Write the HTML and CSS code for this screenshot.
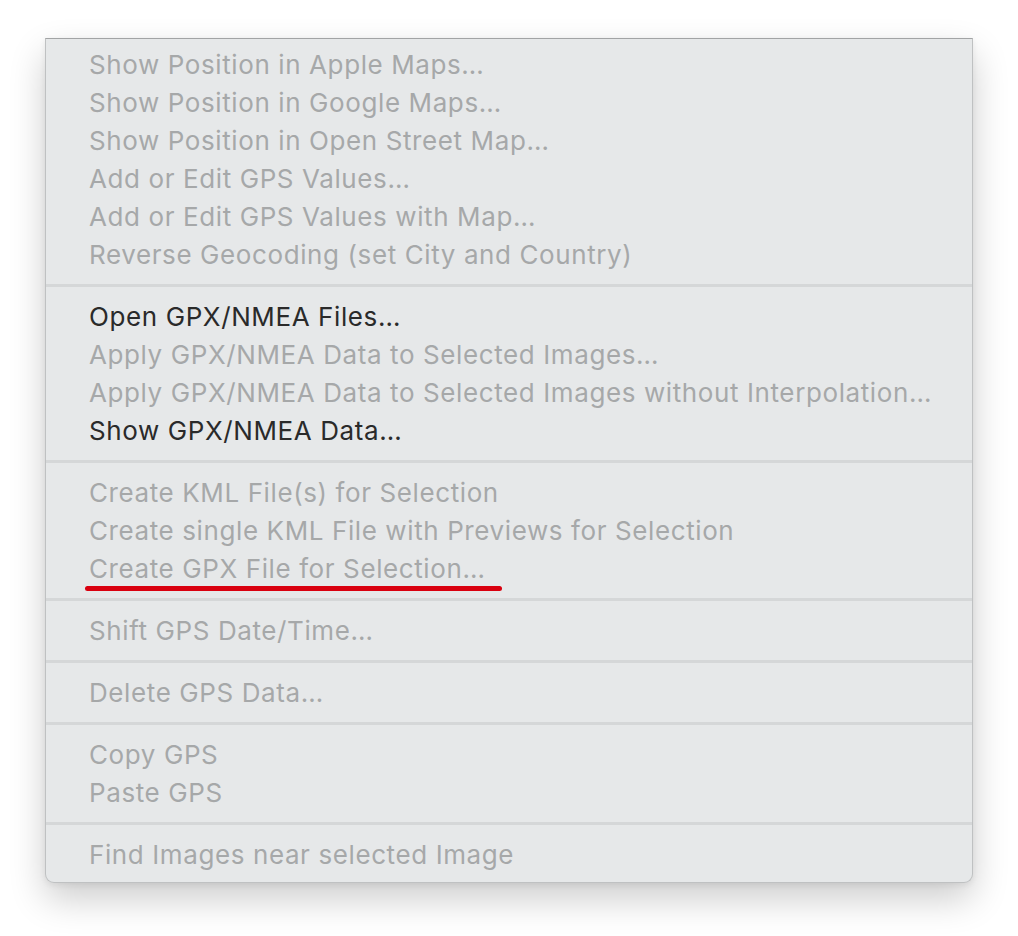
FILE: index.html
```html
<!DOCTYPE html>
<html>
<head>
<meta charset="utf-8">
<link rel="stylesheet" href="styles.css">
</head>
<body>
<div class="menu">
  <div class="group">
    <div class="item">Show Position in Apple Maps…</div>
    <div class="item">Show Position in Google Maps…</div>
    <div class="item">Show Position in Open Street Map…</div>
    <div class="item">Add or Edit GPS Values…</div>
    <div class="item">Add or Edit GPS Values with Map…</div>
    <div class="item">Reverse Geocoding (set City and Country)</div>
  </div>
  <div class="sep"></div>
  <div class="group">
    <div class="item enabled">Open GPX/NMEA Files…</div>
    <div class="item">Apply GPX/NMEA Data to Selected Images…</div>
    <div class="item">Apply GPX/NMEA Data to Selected Images without Interpolation…</div>
    <div class="item enabled">Show GPX/NMEA Data…</div>
  </div>
  <div class="sep"></div>
  <div class="group">
    <div class="item">Create KML File(s) for Selection</div>
    <div class="item">Create single KML File with Previews for Selection</div>
    <div class="item marked">Create GPX File for Selection…</div>
  </div>
  <div class="sep"></div>
  <div class="group">
    <div class="item">Shift GPS Date/Time…</div>
  </div>
  <div class="sep"></div>
  <div class="group">
    <div class="item">Delete GPS Data…</div>
  </div>
  <div class="sep"></div>
  <div class="group">
    <div class="item">Copy GPS</div>
    <div class="item">Paste GPS</div>
  </div>
  <div class="sep"></div>
  <div class="group">
    <div class="item">Find Images near selected Image</div>
  </div>
</div>
</body>
</html>
```

FILE: styles.css
```css
html, body {
  margin: 0;
  padding: 0;
  background: #ffffff;
}
body {
  padding: 38px 0 0 45px;
  height: 936px;
  box-sizing: border-box;
}
.menu {
  width: 928px;
  box-sizing: border-box;
  background: #e6e8e9;
  border: 1px solid #bfc1c2;
  border-top-color: #a2a4a5;
  border-radius: 0 0 9px 9px;
  padding: 7px 0 8px 0;
  box-shadow: 0 16px 36px rgba(0, 0, 0, 0.2), 0 2px 6px rgba(0, 0, 0, 0.07);
  font-family: "Inter", "Noto Sans", sans-serif;
  font-size: 26px;
  letter-spacing: 0.6px;
  color: #a6a8a9;
}
.item {
  height: 38px;
  line-height: 38px;
  padding-left: 43px;
  white-space: nowrap;
  position: relative;
}
.item.enabled {
  color: #2a2a2a;
}
.sep {
  height: 3px;
  background: #d5d7d8;
  margin: 10px 0 11px 0;
}
.marked::after {
  content: "";
  position: absolute;
  left: 39px;
  top: 36px;
  width: 417px;
  height: 5px;
  border-radius: 3px;
  background: #d9000f;
}
```
